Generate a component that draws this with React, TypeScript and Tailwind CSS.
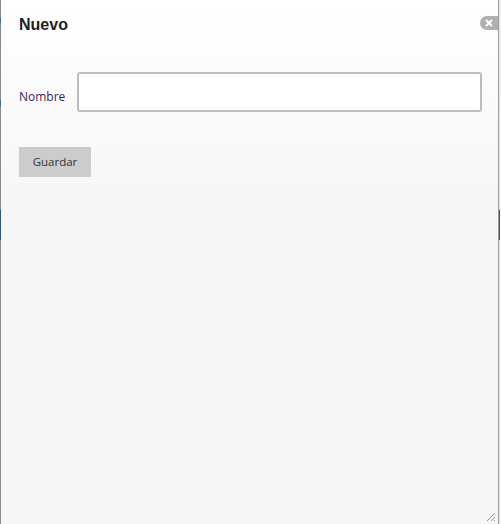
import React from "react";

export default function App() {
  return (
    <div className="w-[501px] h-[524px] overflow-hidden bg-[#f6f6f6] flex">
      {/* underlying page edge, left */}
      <div className="w-px h-full flex flex-col bg-[#8a8a8a]">
        <div className="h-[18px]" />
        <div className="h-[5px] bg-[#3d6b93]" />
        <div className="h-[77px]" />
        <div className="h-[6px] bg-[#3d6b93]" />
        <div className="h-[104px]" />
        <div className="h-[30px] bg-[#2d5a85]" />
      </div>

      <div className="relative w-[498px] h-[524px] border-r border-[#9c9c9c] bg-gradient-to-b from-[#ffffff] to-[#f6f6f6] to-[40%] flex flex-col">
        <div className="h-[46px] pl-[18px] pt-[15px] flex items-start justify-between">
          <span className="font-['Liberation_Sans',Arial,sans-serif] font-bold text-[16px] text-[#222] leading-[20px]">
            Nuevo
          </span>
          <div className="mt-[1px] w-[18px] h-[14px] rounded-l-full bg-[#b0b0b0] flex items-center justify-center">
            <svg width="8" height="8" viewBox="0 0 8 8">
              <path d="M1 1L7 7M7 1L1 7" stroke="#ffffff" strokeWidth="2" />
            </svg>
          </div>
        </div>
        <div className="flex items-center pl-[18px] pt-[26px] font-['Open_Sans',sans-serif]">
          <label className="w-[58px] text-[12px] text-[#3b2260] pt-[9px]">Nombre</label>
          <input
            type="text"
            className="w-[405px] h-[40px] bg-white border-2 border-[#bdbdbd] rounded-[3px] outline-none"
          />
        </div>
        <div className="pl-[18px] pt-[35px]">
          <button className="w-[72px] h-[30px] bg-[#cccccc] text-[11.5px] text-[#333] font-['Open_Sans',sans-serif]">
            Guardar
          </button>
        </div>
        <div className="absolute right-[2px] bottom-[2px]">
          <svg width="10" height="10" viewBox="0 0 10 10">
            <path d="M9 1L1 9M9 5L5 9M9 8L8 9" stroke="#999" strokeWidth="1" />
          </svg>
        </div>
      </div>

      {/* underlying page edge, right */}
      <div className="w-px h-full flex flex-col bg-[#e8e8e8]">
        <div className="h-[210px]" />
        <div className="h-[30px] bg-[#2d5a85]" />
      </div>
    </div>
  );
}
